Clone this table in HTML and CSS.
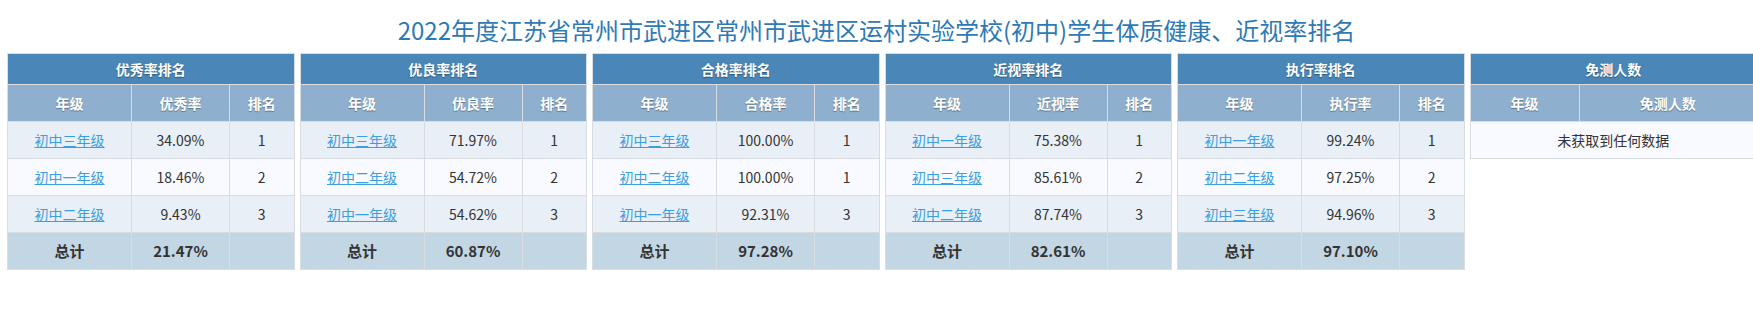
FILE: index.html
```html
<!DOCTYPE html>
<html lang="zh-CN">
<head>
<meta charset="utf-8">
<title>体质健康排名</title>
<link rel="stylesheet" href="styles.css">
</head>
<body>
<h1 class="title">2022年度江苏省常州市武进区常州市武进区运村实验学校(初中)学生体质健康、近视率排名</h1>
<div class="boards">
  <table class="rank">
    <colgroup><col class="c-grade"><col class="c-rate"><col></colgroup>
    <thead>
      <tr><th colspan="3" class="cap">优秀率排名</th></tr>
      <tr><th>年级</th><th>优秀率</th><th>排名</th></tr>
    </thead>
    <tbody>
      <tr class="odd"><td><a href="#">初中三年级</a></td><td>34.09%</td><td>1</td></tr>
      <tr class="even"><td><a href="#">初中一年级</a></td><td>18.46%</td><td>2</td></tr>
      <tr class="odd"><td><a href="#">初中二年级</a></td><td>9.43%</td><td>3</td></tr>
      <tr class="total"><td>总计</td><td>21.47%</td><td></td></tr>
    </tbody>
  </table>
  <table class="rank">
    <colgroup><col class="c-grade"><col class="c-rate"><col></colgroup>
    <thead>
      <tr><th colspan="3" class="cap">优良率排名</th></tr>
      <tr><th>年级</th><th>优良率</th><th>排名</th></tr>
    </thead>
    <tbody>
      <tr class="odd"><td><a href="#">初中三年级</a></td><td>71.97%</td><td>1</td></tr>
      <tr class="even"><td><a href="#">初中二年级</a></td><td>54.72%</td><td>2</td></tr>
      <tr class="odd"><td><a href="#">初中一年级</a></td><td>54.62%</td><td>3</td></tr>
      <tr class="total"><td>总计</td><td>60.87%</td><td></td></tr>
    </tbody>
  </table>
  <table class="rank">
    <colgroup><col class="c-grade"><col class="c-rate"><col></colgroup>
    <thead>
      <tr><th colspan="3" class="cap">合格率排名</th></tr>
      <tr><th>年级</th><th>合格率</th><th>排名</th></tr>
    </thead>
    <tbody>
      <tr class="odd"><td><a href="#">初中三年级</a></td><td>100.00%</td><td>1</td></tr>
      <tr class="even"><td><a href="#">初中二年级</a></td><td>100.00%</td><td>1</td></tr>
      <tr class="odd"><td><a href="#">初中一年级</a></td><td>92.31%</td><td>3</td></tr>
      <tr class="total"><td>总计</td><td>97.28%</td><td></td></tr>
    </tbody>
  </table>
  <table class="rank">
    <colgroup><col class="c-grade"><col class="c-rate"><col></colgroup>
    <thead>
      <tr><th colspan="3" class="cap">近视率排名</th></tr>
      <tr><th>年级</th><th>近视率</th><th>排名</th></tr>
    </thead>
    <tbody>
      <tr class="odd"><td><a href="#">初中一年级</a></td><td>75.38%</td><td>1</td></tr>
      <tr class="even"><td><a href="#">初中三年级</a></td><td>85.61%</td><td>2</td></tr>
      <tr class="odd"><td><a href="#">初中二年级</a></td><td>87.74%</td><td>3</td></tr>
      <tr class="total"><td>总计</td><td>82.61%</td><td></td></tr>
    </tbody>
  </table>
  <table class="rank">
    <colgroup><col class="c-grade"><col class="c-rate"><col></colgroup>
    <thead>
      <tr><th colspan="3" class="cap">执行率排名</th></tr>
      <tr><th>年级</th><th>执行率</th><th>排名</th></tr>
    </thead>
    <tbody>
      <tr class="odd"><td><a href="#">初中一年级</a></td><td>99.24%</td><td>1</td></tr>
      <tr class="even"><td><a href="#">初中二年级</a></td><td>97.25%</td><td>2</td></tr>
      <tr class="odd"><td><a href="#">初中三年级</a></td><td>94.96%</td><td>3</td></tr>
      <tr class="total"><td>总计</td><td>97.10%</td><td></td></tr>
    </tbody>
  </table>
  <table class="rank exempt">
    <colgroup><col class="c-grade2"><col></colgroup>
    <thead>
      <tr><th colspan="2" class="cap">免测人数</th></tr>
      <tr><th>年级</th><th>免测人数</th></tr>
    </thead>
    <tbody>
      <tr class="even"><td colspan="2">未获取到任何数据</td></tr>
    </tbody>
  </table>
</div>
</body>
</html>
```

FILE: styles.css
```css
html, body {
  margin: 0;
  padding: 0;
  background: #ffffff;
}
body {
  font-family: "Noto Sans CJK SC", "Noto Sans", sans-serif;
  color: #333333;
  overflow: hidden;
}
.title {
  margin: 12px 0 5px;
  text-align: center;
  font-size: 24px;
  font-weight: normal;
  line-height: 36px;
  color: #2f7ab4;
}
.boards {
  display: flex;
  align-items: flex-start;
  gap: 5px;
  padding-left: 7px;
  overflow: hidden;
}
.rank {
  flex: 0 0 287.5px;
  width: 287.5px;
  table-layout: fixed;
  border-collapse: separate;
  border-spacing: 0;
  border-top: 1px solid #d9dde2;
  border-left: 1px solid #d9dde2;
  font-size: 14px;
}
.c-grade { width: 124px; }
.c-rate { width: 98px; }
.c-grade2 { width: 109px; }
.rank th,
.rank td {
  padding: 0;
  text-align: center;
  border-right: 1px solid #d9dde2;
  border-bottom: 1px solid #d9dde2;
  white-space: nowrap;
  overflow: hidden;
}
.rank th {
  color: #ffffff;
  font-weight: bold;
  background: #8eb0ce;
  line-height: 36px;
  text-shadow: 0 1px 1px rgba(0, 0, 0, 0.35);
}
.rank th.cap {
  background: #4a86b8;
  line-height: 30px;
}
.rank td {
  line-height: 36px;
  color: #333333;
}
.rank tr.odd td { background: #e8eff7; }
.rank tr.even td { background: #f8faff; }
.rank tr.total td {
  background: #c3d6e4;
  font-weight: bold;
  font-size: 15px;
  color: #333333;
}
.rank a {
  color: #3b9ee0;
  text-decoration: underline;
}
```
